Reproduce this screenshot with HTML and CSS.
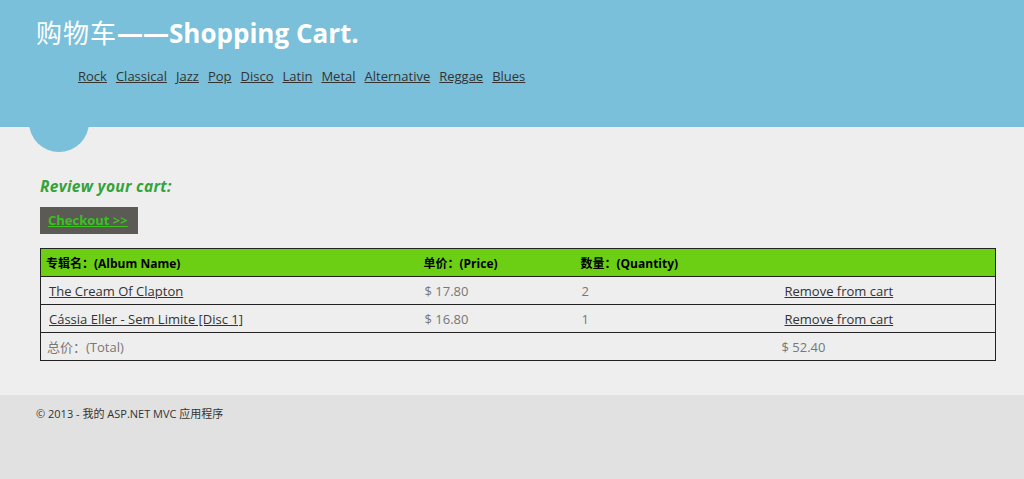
FILE: index.html
```html
<!DOCTYPE html>
<html lang="zh">
<head>
<meta charset="utf-8">
<title>Shopping Cart</title>
<link rel="stylesheet" href="styles.css">
</head>
<body>
<header class="site-header">
  <h1 class="site-title"><span class="cjk">购物车</span>——Shopping Cart.</h1>
  <nav class="genres">
    <a href="#">Rock</a>
    <a href="#">Classical</a>
    <a href="#">Jazz</a>
    <a href="#">Pop</a>
    <a href="#">Disco</a>
    <a href="#">Latin</a>
    <a href="#">Metal</a>
    <a href="#">Alternative</a>
    <a href="#">Reggae</a>
    <a href="#">Blues</a>
  </nav>
  <div class="bump"></div>
</header>
<main class="content">
  <h3 class="review">Review your cart:</h3>
  <div class="checkout"><a href="#">Checkout &gt;&gt;</a></div>
  <table class="cart">
    <colgroup>
      <col class="c-name"><col class="c-price"><col class="c-qty"><col class="c-act">
    </colgroup>
    <tr class="head">
      <th>专辑名：(Album Name)</th>
      <th>单价：(Price)</th>
      <th>数量：(Quantity)</th>
      <th></th>
    </tr>
    <tr>
      <td><a class="item" href="#">The Cream Of Clapton</a></td>
      <td>$ 17.80</td>
      <td>2</td>
      <td><a class="remove" href="#">Remove from cart</a></td>
    </tr>
    <tr>
      <td><a class="item" href="#">Cássia Eller - Sem Limite [Disc 1]</a></td>
      <td>$ 16.80</td>
      <td>1</td>
      <td><a class="remove" href="#">Remove from cart</a></td>
    </tr>
    <tr>
      <td>总价：(Total)</td>
      <td></td>
      <td></td>
      <td class="total">$ 52.40</td>
    </tr>
  </table>
</main>
<footer class="site-footer">
  <p>© 2013 - 我的 ASP.NET MVC 应用程序</p>
</footer>
</body>
</html>
```

FILE: styles.css
```css
html, body {
  margin: 0;
  padding: 0;
}
body {
  background: #e1e1e1;
  font-family: "Open Sans", "Noto Sans CJK SC", sans-serif;
  color: #333;
  font-size: 13px;
}
.site-header {
  position: relative;
  background: #7ac0da;
  height: 127px;
  padding: 14px 0 0 36px;
  box-sizing: border-box;
}
.site-title {
  margin: 0;
  color: #fff;
  font-size: 26px;
  font-weight: 700;
  line-height: 36px;
  letter-spacing: 0;
}
.site-title .cjk {
  font-weight: 400;
  font-family: "Noto Sans CJK SC", sans-serif;
  letter-spacing: 1px;
}
.genres {
  margin: 16px 0 0 42px;
  display: flex;
  gap: 9px;
  font-size: 13px;
  line-height: 18px;
}
.genres a {
  color: #333;
}
.bump {
  position: absolute;
  left: 29px;
  top: 92px;
  width: 60px;
  height: 60px;
  border-radius: 50%;
  background: #7ac0da;
}
.content {
  background: #eeeeee;
  padding: 50px 28px 34px 40px;
}
.review {
  margin: 0;
  color: #33a33a;
  font-size: 15.5px;
  font-style: italic;
  font-weight: 700;
  line-height: 18px;
  letter-spacing: 0.3px;
}
.checkout {
  margin-top: 12px;
  width: 98px;
  height: 27px;
  background: #5c5a55;
  box-sizing: border-box;
  padding: 5px 0 0 8px;
  font-size: 13px;
  font-weight: 700;
  line-height: 17px;
}
.checkout a {
  color: #37c21e;
}
.cart {
  margin-top: 14px;
  width: 956px;
  border-collapse: collapse;
  border: 1px solid #222;
  table-layout: fixed;
}
.c-name { width: 378px; }
.c-price { width: 157px; }
.c-qty { width: 203px; }
.cart th {
  background: #6ccf14;
  color: #000;
  font-size: 12px;
  font-weight: 700;
  text-align: left;
  height: 27px;
  padding: 0 5px;
  border-bottom: 1px solid #222;
}
.cart td {
  height: 27px;
  padding: 0 6px;
  color: #777;
  border-top: 1px solid #222;
  font-size: 13px;
}
.cart td .item {
  margin-left: 2px;
}
.cart a {
  color: #333;
}
.cart td.total {
  padding-left: 3px;
}
.site-footer {
  padding: 0 36px;
  height: 84px;
}
.site-footer p {
  margin: 0;
  padding-top: 12px;
  font-size: 11px;
  line-height: 14px;
  color: #333;
}
```
